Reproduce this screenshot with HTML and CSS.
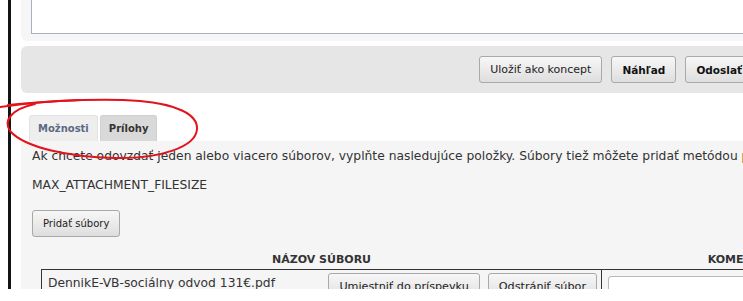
FILE: index.html
```html
<!DOCTYPE html>
<html lang="sk">
<head>
    <meta charset="UTF-8">
    <meta name="viewport" content="width=device-width, initial-scale=1.0">
    <title>Príspevok - prílohy</title>
    <link rel="stylesheet" href="styles.css">
</head>
<body>
    <div class="frame">
        <div class="main">
            <div class="panel editor">
                <textarea class="message" name="message"></textarea>
            </div>

            <div class="panel toolbar">
                <button type="button" class="btn">Uložiť ako koncept</button>
                <button type="button" class="btn btn-strong">Náhľad</button>
                <button type="submit" class="btn btn-strong">Odoslať</button>
            </div>

            <ul class="tabs">
                <li class="tab">Možnosti</li>
                <li class="tab active">Prílohy</li>
            </ul>

            <div class="panel attach">
                <p class="hint">Ak chcete odovzdať jeden alebo viacero súborov, vyplňte nasledujúce položky. Súbory tiež môžete pridať metódou po</p>
                <p class="hint">MAX_ATTACHMENT_FILESIZE</p>
                <button type="button" class="btn add-files">Pridať súbory</button>

                <table class="files">
                    <thead>
                        <tr>
                            <th class="col-name">NÁZOV SÚBORU</th>
                            <th class="col-comment">KOMENTÁR SÚBORU</th>
                        </tr>
                    </thead>
                    <tbody>
                        <tr>
                            <td class="col-name">
                                <div class="file-row">
                                    <span class="file-name">DennikE-VB-sociálny odvod 131€.pdf</span>
                                    <span class="file-actions">
                                        <button type="button" class="btn">Umiestniť do príspevku</button>
                                        <button type="button" class="btn">Odstrániť súbor</button>
                                    </span>
                                </div>
                            </td>
                            <td class="col-comment">
                                <input type="text" class="comment" name="comment">
                            </td>
                        </tr>
                    </tbody>
                </table>
            </div>
        </div>
    </div>

    <!-- red marker circle drawn over the tabs -->
    <svg class="scribble" width="210" height="70" viewBox="0 95 210 70">
        <path d="M0,107 C20,104 50,101 80,100" />
        <path d="M8,105 C40,102 100,98 140,101 C175,104 198,114 197,129 C196,147 160,159 115,158 C70,157 25,148 10,131 C3,120 12,109 35,104" />
    </svg>
</body>
</html>
```

FILE: styles.css
```css
body {
    margin: 0;
    background: #fff;
    font-family: "DejaVu Sans", Verdana, sans-serif;
    font-size: 12.3px;
    color: #333;
    overflow: hidden;
}
.frame {
    margin-left: 8px;
    border-left: 3px solid #141414;
    padding-left: 10px;
    height: 301px;
}
.main {
    width: 742px;
}
.panel {
    border-radius: 6px;
}
.editor {
    background: #f6f6f6;
    margin-top: -12px;
    padding: 10px 10px 7px;
}
.message {
    display: block;
    width: 100%;
    height: 36px;
    box-sizing: border-box;
    border: 1px solid #a7b1bc;
    border-radius: 0;
    background: #fff;
    resize: none;
}
.toolbar {
    margin-top: 5px;
    background: #e6e6e6;
    padding: 10px;
    display: flex;
    justify-content: flex-end;
    gap: 9px;
}
.btn {
    font-family: "DejaVu Sans", Verdana, sans-serif;
    font-size: 11px;
    color: #222;
    height: 27px;
    padding: 0 10px;
    border: 1px solid #a9a9a9;
    border-radius: 3px;
    background: linear-gradient(#f7f7f7, #dedede);
    white-space: nowrap;
}
.btn-strong {
    font-weight: bold;
    font-size: 10.5px;
    color: #111;
}
.tabs {
    list-style: none;
    margin: 22px 0 0;
    padding: 0 0 0 8px;
    display: flex;
    gap: 2px;
}
.tab {
    font-size: 10px;
    font-weight: bold;
    color: #5b6985;
    background: #eeeeee;
    border: 1px solid #e2e2e2;
    border-bottom: 0;
    border-radius: 3px 3px 0 0;
    padding: 0 8px;
    height: 25px;
    line-height: 26px;
}
.tab.active {
    color: #333;
    background: #d9d9d9;
    border-color: #d0d0d0;
}
.attach {
    background: #f5f5f5;
    border-radius: 0 6px 6px 6px;
    padding: 7px 11px 20px;
    height: 200px;
}
.hint {
    margin: 0 0 13px;
    line-height: 16px;
    white-space: nowrap;
}
.add-files {
    margin-top: 4px;
    font-size: 10px;
}
.files {
    margin: 16px 0 0 9px;
    border-collapse: collapse;
    width: 898px;
}
.files th {
    font-size: 11px;
    font-weight: bold;
    color: #333;
    padding: 0 0 3px;
    text-align: center;
}
.files td {
    border: 1px solid #333;
    vertical-align: top;
    padding: 3px 4px 5px 6px;
}
.col-name {
    width: 549px;
}
.file-row {
    display: flex;
    justify-content: space-between;
}
.file-name {
    padding-top: 3px;
}
.file-actions {
    display: flex;
    gap: 8px;
    font-size: 0;
}
.files .btn {
    font-size: 11.2px;
}
.comment {
    margin-top: 3px;
    width: 100%;
    height: 24px;
    box-sizing: border-box;
    border: 1px solid #b8b8b8;
    border-radius: 3px;
    background: #fff;
}
.scribble {
    position: absolute;
    left: 0;
    top: 95px;
    fill: none;
    stroke: #e3121b;
    stroke-width: 2;
    stroke-linecap: round;
}
```
